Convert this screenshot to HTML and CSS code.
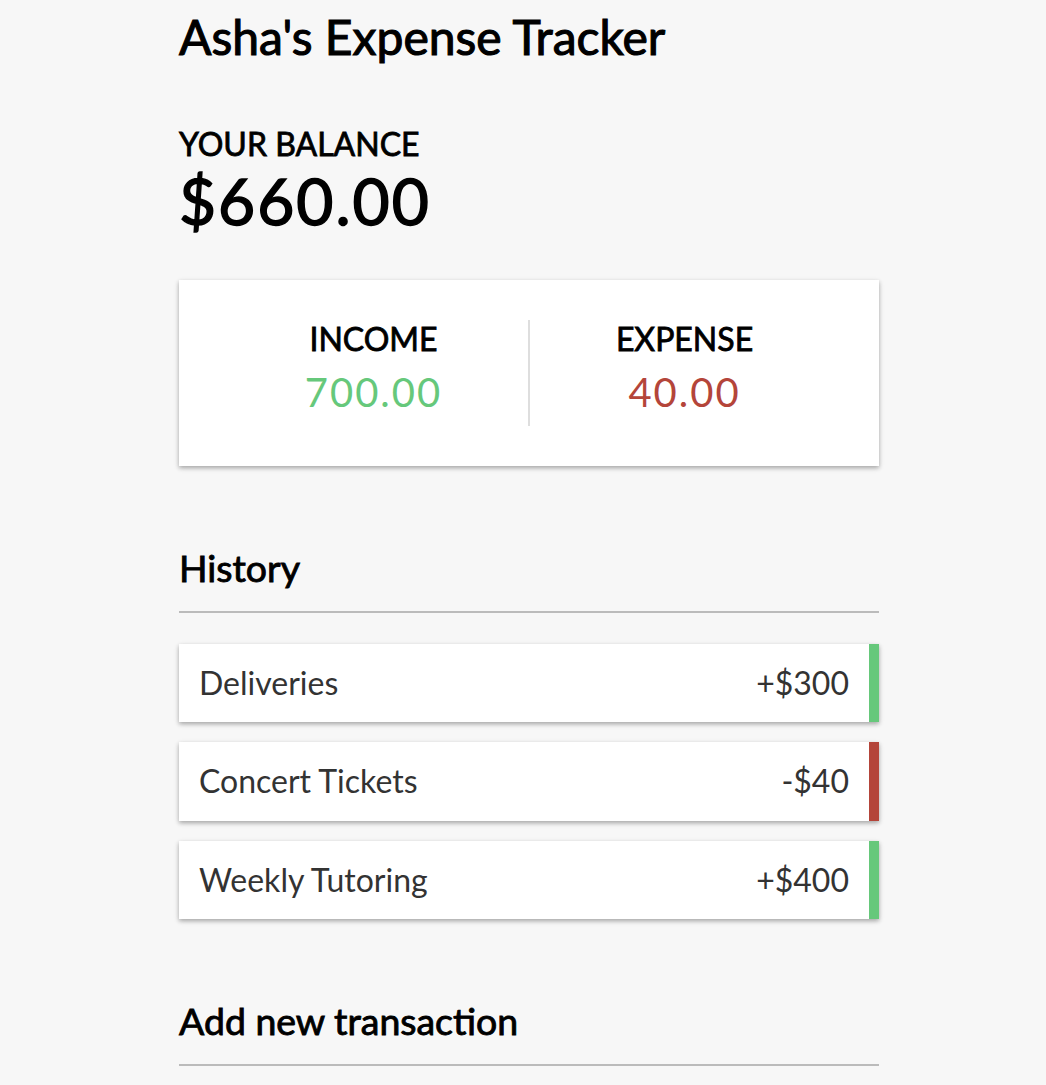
FILE: index.html
```html
<!DOCTYPE html>
<html lang="en">
<head>
<meta charset="utf-8">
<title>Asha's Expense Tracker</title>
<link rel="stylesheet" href="styles.css">
</head>
<body>
  <div class="container">
    <h2 class="title">Asha's Expense Tracker</h2>
    <h4 class="label">Your Balance</h4>
    <h1 class="balance">$660.00</h1>
    <div class="inc-exp">
      <div class="inc-exp-col">
        <h4 class="label">Income</h4>
        <p class="money plus">700.00</p>
      </div>
      <div class="inc-exp-col">
        <h4 class="label">Expense</h4>
        <p class="money minus">40.00</p>
      </div>
    </div>
    <h3 class="section">History</h3>
    <ul class="list">
      <li class="item plus"><span>Deliveries</span><span>+$300</span></li>
      <li class="item minus"><span>Concert Tickets</span><span>-$40</span></li>
      <li class="item plus"><span>Weekly Tutoring</span><span>+$400</span></li>
    </ul>
    <h3 class="section">Add new transaction</h3>
  </div>
</body>
</html>
```
FILE: styles.css
```css
* { box-sizing: border-box; }
html, body { margin: 0; }
body {
  background-color: #f7f7f7;
  font-family: Lato, "Open Sans", sans-serif;
  display: flex;
  flex-direction: column;
  align-items: center;
  padding-left: 12px;
  min-height: 100vh;
}
.container {
  width: 700px;
}
.title {
  font-size: 48px;
  font-weight: 400;
  -webkit-text-stroke: 1.1px currentColor;
  margin: 8px 0 59px;
  line-height: 1.2;
}
.label {
  margin: 0;
  font-size: 32px;
  font-weight: 400;
  -webkit-text-stroke: 0.8px currentColor;
  text-transform: uppercase;
  line-height: 1.2;
}
.balance {
  margin: 0;
  font-size: 64px;
  font-weight: 400;
  -webkit-text-stroke: 1.5px currentColor;
  letter-spacing: 2px;
  line-height: 1.2;
}
.inc-exp {
  background-color: #fff;
  box-shadow: 0 2px 6px rgba(0,0,0,0.12), 0 2px 4px rgba(0,0,0,0.24);
  padding: 40px;
  display: flex;
  justify-content: space-between;
  margin: 40px 0;
}
.inc-exp-col {
  flex: 1;
  text-align: center;
}
.inc-exp-col:first-child {
  border-right: 2px solid #dedede;
}
.money {
  font-size: 40px;
  letter-spacing: 2px;
  margin: 10px 0;
  line-height: 1.2;
}
.money.plus { color: #66c87b; }
.money.minus { color: #b4453a; }
.section {
  font-size: 37.44px;
  font-weight: 400;
  -webkit-text-stroke: 0.9px currentColor;
  line-height: 1.2;
  border-bottom: 2px solid #bbb;
  padding-bottom: 20px;
  margin: 80px 0 20px;
}
.list {
  list-style-type: none;
  padding: 0;
  margin: 31px 0 77px;
}
.item {
  background-color: #fff;
  box-shadow: 0 2px 6px rgba(0,0,0,0.12), 0 2px 4px rgba(0,0,0,0.24);
  color: #333;
  display: flex;
  justify-content: space-between;
  padding: 20px;
  margin: 20px 0;
  font-size: 32px;
  line-height: 1.2;
}
.item.plus { border-right: 10px solid #66c87b; }
.item.minus { border-right: 10px solid #b4453a; }
```
